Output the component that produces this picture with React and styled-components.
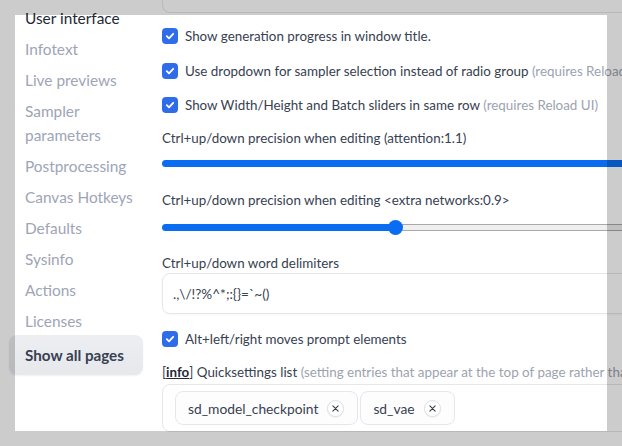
import React from 'react';
import styled, { createGlobalStyle } from 'styled-components';

const GlobalStyle = createGlobalStyle`
  body {
    margin: 0;
    overflow: hidden;
    background: #ffffff;
    font-family: Lato, "Noto Sans", sans-serif;
    color: #374151;
  }
`;

const Page = styled.div`
  display: flex;
  gap: 19px;
  width: 760px;
  height: 446px;
  padding-left: 9px;
  box-sizing: border-box;
`;

const Sidebar = styled.nav`
  display: flex;
  flex-direction: column;
  width: 134px;
  flex-shrink: 0;
  padding-top: 2px;
`;

const NavItem = styled.div`
  padding: 3.5px 6px 3.5px 16px;
  font-size: 15.4px;
  line-height: 24px;
  color: ${props => (props.active ? '#1f2937' : '#9ea5b6')};
`;

const ShowAll = styled.div`
  margin-top: -1px;
  padding: 8px 16px;
  font-size: 15.2px;
  line-height: 24px;
  font-weight: 700;
  color: #374151;
  white-space: nowrap;
  background: linear-gradient(180deg, #eceef2, #e6e8ec);
  border-radius: 8px;
  box-shadow: 0 1px 2px rgba(0, 0, 0, 0.06);
`;

const Main = styled.main`
  display: flex;
  flex-direction: column;
  width: 560px;
  flex-shrink: 0;
`;

const PrevField = styled.div`
  height: 12px;
  border: 1px solid #e5e7eb;
  border-top: none;
  border-radius: 0 0 8px 8px;
`;

const CheckRow = styled.label`
  display: flex;
  align-items: center;
  gap: 7px;
  height: 22px;
  margin-top: ${props => props.mt}px;
  font-size: 13.4px;
  white-space: nowrap;
`;

const Box = styled.span`
  display: flex;
  align-items: center;
  justify-content: center;
  width: 16px;
  height: 16px;
  border-radius: 4px;
  background: #2f6cea;
  flex-shrink: 0;
`;

const Hint = styled.span`
  color: #9ca3af;
`;

const Label = styled.div`
  margin-top: ${props => props.mt}px;
  font-size: 13.4px;
  line-height: 20px;
  white-space: nowrap;
`;

const Track = styled.div`
  position: relative;
  display: flex;
  align-items: center;
  height: 14px;
  margin-top: ${props => props.mt}px;
`;

const Fill = styled.div`
  height: 7px;
  background: #0a6cf0;
  border-radius: 4px 0 0 4px;
`;

const Rest = styled.div`
  flex: 1;
  height: 5px;
  background: #efefef;
  border: 1px solid #a9a9a9;
  border-left: none;
  border-radius: 0 4px 4px 0;
`;

const Thumb = styled.div`
  width: 15px;
  height: 15px;
  margin: 0 -7px;
  border-radius: 50%;
  background: #0a6cf0;
  z-index: 1;
`;

const TextBox = styled.div`
  display: flex;
  align-items: center;
  height: 41px;
  padding: 0 10px;
  box-sizing: border-box;
  border: 1px solid #e5e7eb;
  border-radius: 8px;
  box-shadow: 0 1px 2px rgba(0, 0, 0, 0.04);
  font-size: 13.6px;
  color: #374151;
`;

const InfoLink = styled.span`
  font-weight: 700;
  text-decoration: underline;
  color: #1f2937;
`;

const Dropdown = styled.div`
  display: flex;
  gap: 2px;
  height: 48px;
  margin-top: 2px;
  padding: 6px 12px;
  box-sizing: border-box;
  border: 1px solid #e5e7eb;
  border-radius: 8px;
`;

const Chip = styled.div`
  display: flex;
  align-items: center;
  gap: 9px;
  height: 34px;
  padding: 0 13px 0 12px;
  box-sizing: border-box;
  border: 1px solid #e5e7eb;
  border-radius: 8px;
  background: #fdfdfd;
  font-size: 13.8px;
  color: #374151;
`;

const Remove = styled.span`
  display: flex;
  align-items: center;
  justify-content: center;
  width: 17px;
  height: 17px;
  border-radius: 50%;
  border: 1px solid #dcdfe4;
  background: #ffffff;
  box-sizing: border-box;
  box-shadow: 0 1px 1px rgba(0, 0, 0, 0.05);
`;

const Spotlight = styled.div`
  position: fixed;
  left: 15px;
  top: 15px;
  width: 592px;
  height: 416px;
  box-shadow: 0 0 0 2000px rgba(0, 0, 0, 0.2);
  pointer-events: none;
`;

const navItems = [
  'Infotext',
  'Live previews',
  'Sampler parameters',
  'Postprocessing',
  'Canvas Hotkeys',
  'Defaults',
  'Sysinfo',
  'Actions',
  'Licenses',
];

const Check = () => (
  <Box>
    <svg width="10" height="10" viewBox="0 0 10 10">
      <path d="M1.8 5.2 L4 7.3 L8.2 2.8" fill="none" stroke="#fff" strokeWidth="1.8" strokeLinecap="round" strokeLinejoin="round" />
    </svg>
  </Box>
);

const X = () => (
  <Remove>
    <svg width="7" height="7" viewBox="0 0 8 8">
      <path d="M1 1 L7 7 M7 1 L1 7" stroke="#374151" strokeWidth="1.3" strokeLinecap="round" />
    </svg>
  </Remove>
);

const Slider = ({ mt, value }) => (
  <Track mt={mt}>
    <Fill style={{ width: value }} />
    {value !== '100%' && <Thumb />}
    {value !== '100%' && <Rest />}
  </Track>
);

export default function App() {
  return (
    <>
      <GlobalStyle />
      <Page>
        <Sidebar>
          <NavItem active>User interface</NavItem>
          {navItems.map(item => (
            <NavItem key={item}>{item}</NavItem>
          ))}
          <ShowAll>Show all pages</ShowAll>
        </Sidebar>
        <Main>
          <PrevField />
          <CheckRow mt={12}>
            <Check />
            Show generation progress in window title.
          </CheckRow>
          <CheckRow mt={13}>
            <Check />
            <span>
              Use dropdown for sampler selection instead of radio group <Hint>(requires Reload UI)</Hint>
            </span>
          </CheckRow>
          <CheckRow mt={12}>
            <Check />
            <span>
              Show Width/Height and Batch sliders in same row <Hint>(requires Reload UI)</Hint>
            </span>
          </CheckRow>
          <Label mt={12}>Ctrl+up/down precision when editing (attention:1.1)</Label>
          <Slider mt={8} value="100%" />
          <Label mt={20}>Ctrl+up/down precision when editing &lt;extra networks:0.9&gt;</Label>
          <Slider mt={10} value="233px" />
          <Label mt={19}>Ctrl+up/down word delimiters</Label>
          <TextBox>.,\/!?%^*;:{'{}'}=`~()</TextBox>
          <CheckRow mt={14}>
            <Check />
            Alt+left/right moves prompt elements
          </CheckRow>
          <Label mt={12}>
            [<InfoLink>info</InfoLink>] Quicksettings list{' '}
            <Hint>(setting entries that appear at the top of page rather than in settings tab)</Hint>
          </Label>
          <Dropdown>
            <Chip>
              sd_model_checkpoint
              <X />
            </Chip>
            <Chip>
              sd_vae
              <X />
            </Chip>
          </Dropdown>
        </Main>
      </Page>
      <Spotlight />
    </>
  );
}
